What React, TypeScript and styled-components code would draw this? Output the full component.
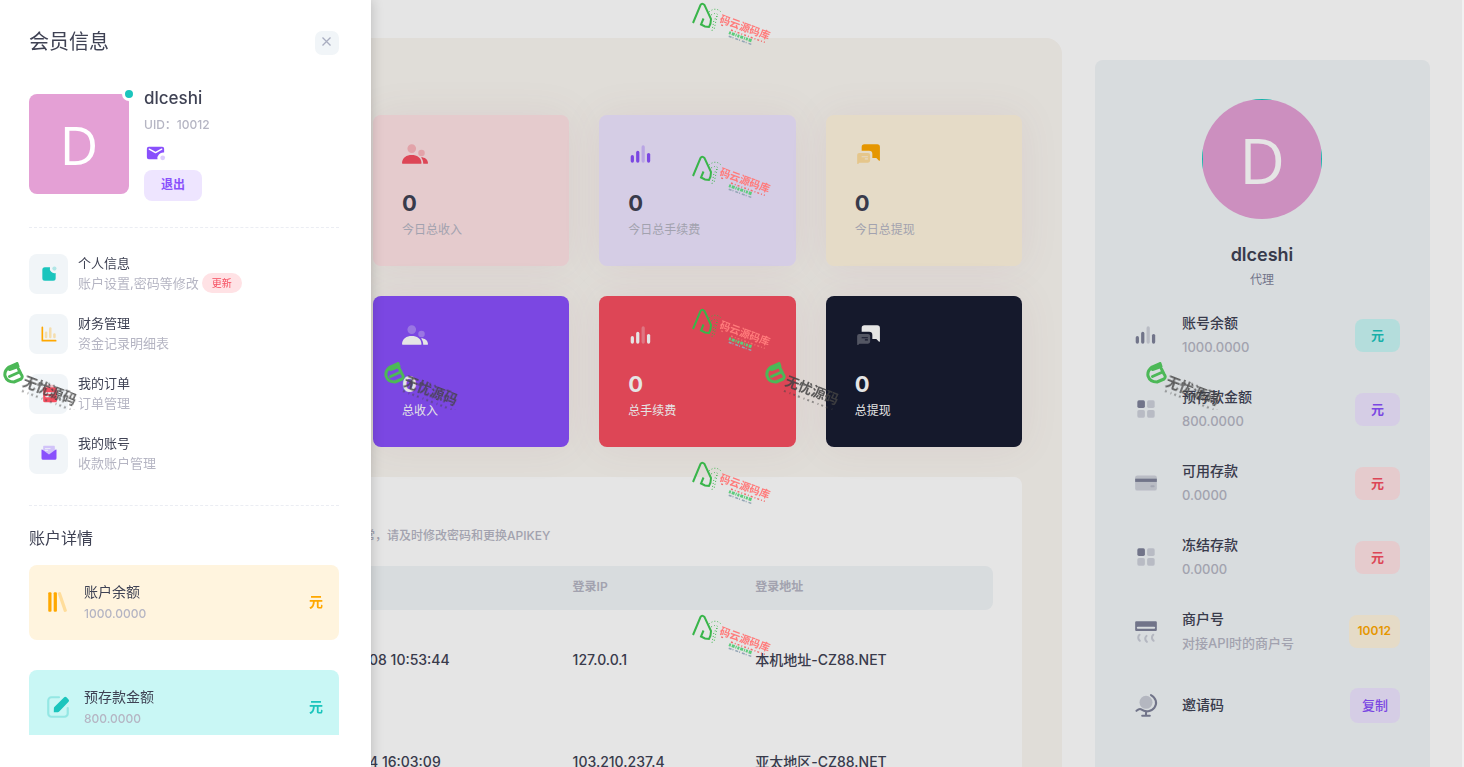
import React from "react";
import styled, { createGlobalStyle } from "styled-components";

const c = {
  text: "#3f4254",
  strong: "#3f4254",
  muted: "#b5b5c3",
  soft: "#f1f5f8",
  primary: "#8950fc",
  primaryLight: "#eee5ff",
  danger: "#f64e60",
  dangerLight: "#ffe2e5",
  warning: "#ffa800",
  warningLight: "#fff4de",
  success: "#1bc5bd",
  successLight: "#c9f7f5",
  dark: "#181c32",
  slate: "#7e8299",
};

const GlobalStyle = createGlobalStyle`
  *, *::before, *::after { box-sizing: border-box; }
  body {
    margin: 0;
    background: #fff;
    color: ${c.text};
    font-family: Inter, "Noto Sans CJK SC", sans-serif;
    font-size: 13px;
    line-height: 20px;
  }
  h1, h2, h3, p, ul { margin: 0; padding: 0; }
  ul { list-style: none; }
  a { color: inherit; text-decoration: none; }
  button { font: inherit; border: 0; cursor: pointer; }
`;

/* ---------- icons ---------- */

type IconName =
  | "group" | "equalizer" | "chat" | "mailDot" | "notify" | "chart" | "article"
  | "mailOpen" | "library" | "write" | "blocks" | "card" | "air" | "globe";

const glyphs: Record<IconName, React.ReactNode> = {
  group: (
    <>
      <path opacity=".3" d="M18 14a3 3 0 1 1 0-6 3 3 0 0 1 0 6ZM9 11a4 4 0 1 1 0-8 4 4 0 0 1 0 8Z" />
      <path d="M17.6 15c3.4.04 6.19 1.76 6.4 5.4.01.15 0 .6-.54.6H19.6c0-2.25-.74-4.33-2-6ZM0 20.2C.39 15.43 4.26 13 8.98 13c4.79 0 8.72 2.29 9.02 7.2.01.2 0 .8-.75.8H.73c-.25 0-.75-.54-.73-.8Z" />
    </>
  ),
  equalizer: (
    <>
      <rect opacity=".3" x="12.500" y="4" width="3" height="16" rx="1.5" />
      <rect x="7.500" y="9" width="3" height="11" rx="1.5" />
      <rect x="17.500" y="11" width="3" height="9" rx="1.5" />
      <rect x="2.500" y="13" width="3" height="7" rx="1.5" />
    </>
  ),
  chat: (
    <>
      <path d="M16 15.63V12a3 3 0 0 0-3-3H6.16V5.53A2.53 2.53 0 0 1 8.69 3h11.79A2.53 2.53 0 0 1 23 5.53v7.58l.02 4.68a.5.5 0 0 1-.85.35l-2.51-2.51H16Z" />
      <path opacity=".3" fillRule="evenodd" d="M1.99 18v-5a2 2 0 0 1 2-2h8a2 2 0 0 1 2 2v5a2 2 0 0 1-2 2H4.1l-1.24 1.19a.5.5 0 0 1-.85-.36v-2.5L1.99 18ZM6.5 14a.5.5 0 0 0 0 1h5a.5.5 0 0 0 0-1h-5Zm3 2a.5.5 0 0 0 0 1h2a.5.5 0 0 0 0-1h-2Z" />
    </>
  ),
  mailDot: (
    <>
      <path fillRule="evenodd" d="M21 12.08A6 6 0 0 0 14.08 19H5a2 2 0 0 1-2-2V8a2 2 0 0 1 2-2h14a2 2 0 0 1 2 2v4.08Zm-2.86-4.24L12 11.15 5.86 7.84a.75.75 0 0 0-.72 1.32l6.5 3.5c.23.12.49.12.72 0l6.5-3.5a.75.75 0 1 0-.72-1.32Z" />
      <circle opacity=".3" cx="19.5" cy="17.5" r="2.5" />
    </>
  ),
  notify: (
    <>
      <path d="M13.2 4A5.5 5.5 0 0 0 20 10.8V17a3 3 0 0 1-3 3H7a3 3 0 0 1-3-3V7a3 3 0 0 1 3-3h6.2Z" />
      <circle opacity=".3" cx="18.5" cy="5.5" r="2.5" />
    </>
  ),
  chart: (
    <>
      <rect opacity=".3" x="12" y="4" width="3" height="13" rx="1.5" />
      <rect opacity=".3" x="7" y="9" width="3" height="8" rx="1.5" />
      <rect opacity=".3" x="17" y="11" width="3" height="6" rx="1.5" />
      <path d="M5 19h15a1 1 0 0 1 0 2H4a1 1 0 0 1-1-1V4a1 1 0 1 1 2 0v15Z" />
    </>
  ),
  article: (
    <>
      <path fillRule="evenodd" d="M6 4h14a1.5 1.5 0 0 1 1.500 1.500V20a2 2 0 0 1-2 2H7a2 2 0 0 1-2-2V5a1 1 0 0 1 1-1Zm2.500 6a1 1 0 0 0 0 2h9a1 1 0 0 0 0-2h-9Zm0 4a1 1 0 0 0 0 2h5a1 1 0 0 0 0-2h-5Z" />
      <rect opacity=".3" x="8" y="1" width="10" height="3" rx="1" />
    </>
  ),
  mailOpen: (
    <>
      <path opacity=".3" fillRule="evenodd" d="M6 2h12a1 1 0 0 1 1 1v9a1 1 0 0 1-1 1H6a1 1 0 0 1-1-1V3a1 1 0 0 1 1-1Zm1.500 3a.5.5 0 0 0 0 1h6a.5.5 0 0 0 0-1h-6Zm0 2a.5.5 0 0 0 0 1h3a.5.5 0 0 0 0-1h-3Z" />
      <path d="M3.790 6.570 12 12.500l8.210-5.930a.5.5 0 0 1 .79.41V17a2 2 0 0 1-2 2H5a2 2 0 0 1-2-2V6.980a.5.5 0 0 1 .79-.41Z" />
    </>
  ),
  library: (
    <>
      <rect x="3" y="3" width="3" height="18" rx="1" />
      <rect x="8" y="3" width="3" height="18" rx="1" />
      <rect opacity=".3" x="14.500" y="2.500" width="3" height="19" rx="1" transform="rotate(-19 16 12)" />
    </>
  ),
  write: (
    <>
      <path transform="rotate(-135 14.700 10.700)" d="m12.270 18.230-.26-12.770c-.01-.4.140-.78.420-1.070L15 1.700l2.590 2.700c.27.280.42.650.420 1.040l-.04 12.770a1.500 1.500 0 0 1-1.500 1.490h-2.700a1.500 1.500 0 0 1-1.500-1.470Z" />
      <path opacity=".3" d="M12.900 2a1 1 0 0 1 0 2H6a2 2 0 0 0-2 2v12c0 1.100.9 2 2 2h12a2 2 0 0 0 2-2v-5a1 1 0 1 1 2 0v5a4 4 0 0 1-4 4H6a4 4 0 0 1-4-4V6a4 4 0 0 1 4-4h6.900Z" />
    </>
  ),
  blocks: (
    <>
      <rect x="4" y="4" width="7" height="7" rx="1.500" />
      <g opacity=".3">
        <rect x="13" y="4" width="7" height="7" rx="1.500" />
        <rect x="4" y="13" width="7" height="7" rx="1.500" />
        <rect x="13" y="13" width="7" height="7" rx="1.500" />
      </g>
    </>
  ),
  card: (
    <>
      <rect opacity=".3" x="2" y="5" width="20" height="14" rx="2" />
      <rect x="2" y="8" width="20" height="3" />
      <rect opacity=".3" x="16" y="14" width="4" height="2" rx="1" />
    </>
  ),
  air: (
    <>
      <path fillRule="evenodd" d="M3 3h18a1 1 0 0 1 1 1v7a1 1 0 0 1-1 1H3a1 1 0 0 1-1-1V4a1 1 0 0 1 1-1Zm1.500 5a.9.9 0 0 0 0 2h15a.9.9 0 0 0 0-2h-15Z" />
      <g opacity=".35" fill="none" stroke="currentColor" strokeWidth="1.900" strokeLinecap="round">
        <path d="M6 15.500C4.200 17.200 4.600 19.400 6.300 21M12.500 16.500c-1.800 1.700-1.500 3.900.3 5.500M18.700 15.500c-1.800 1.700-1.500 3.900.3 5.500" />
      </g>
    </>
  ),
  globe: (
    <>
      <circle opacity=".35" cx="12" cy="9.500" r="6" />
      <g fill="none" stroke="currentColor" strokeWidth="1.900" strokeLinecap="round" strokeLinejoin="round">
        <path d="M16.600 2.800c4.800 2.600 6 7.800 3.200 11.600-2.900 3.900-8.400 4.600-12.200 1.700-.9-.7-2.700-.2-4.400 1.300M12 18.500v3M8.500 21.900h7" />
      </g>
    </>
  ),
};

const IconSvg = styled.svg<{ $size: number }>`
  display: block;
  flex: none;
  width: ${(p) => p.$size}px;
  height: ${(p) => p.$size}px;
  fill: currentColor;
`;

const Icon = ({ name, size = 26 }: { name: IconName; size?: number }) => (
  <IconSvg viewBox="0 0 24 24" $size={size} aria-hidden="true">{glyphs[name]}</IconSvg>
);

/* ---------- page behind the drawer ---------- */

const Page = styled.div`
  position: relative;
  height: 100vh;
  overflow: hidden;
  border-right: 2px solid #f1f1f1;
`;

const Layout = styled.div`
  display: flex;
  align-items: stretch;
  gap: 33px;
  min-height: 100%;
  padding: 38px 32px 0 293px;
`;

const Panel = styled.main`
  flex: 1;
  min-width: 0;
  padding: 77px 40px 0;
  border-radius: 16px 16px 0 0;
  background: #faf6f1;
`;

const StatGrid = styled.div`
  display: grid;
  grid-template-columns: repeat(3, minmax(0, 1fr));
  gap: 30px;
  padding-left: 40px;
`;

const StatCard = styled.section<{ $bg: string; $label: string; $value: string; $icon: string }>`
  padding: 26px 29px;
  border-radius: 8px;
  background: ${(p) => p.$bg};
  color: ${(p) => p.$label};
  box-shadow: 0 0 40px rgba(140, 80, 90, 0.08);
  > svg { color: ${(p) => p.$icon}; }
  > strong { color: ${(p) => p.$value}; }
`;

const StatValue = styled.strong`
  display: block;
  margin-top: 19px;
  font-size: 22px;
  font-weight: 700;
  line-height: 34px;
`;

const StatLabel = styled.p`
  font-size: 12px;
  line-height: 20px;
`;

const LogCard = styled.section`
  margin-top: 30px;
  padding: 48px 29px 0 30px;
  border-radius: 0 8px 0 0;
  background: #fff;
`;

const LogNote = styled.p`
  margin-bottom: 19px;
  color: ${c.muted};
  font-size: 12px;
  font-weight: 500;
  line-height: 22px;
  white-space: nowrap;
`;

const LogTable = styled.table`
  width: 100%;
  table-layout: fixed;
  border-collapse: collapse;
  text-align: left;
  th {
    height: 44px;
    padding: 0 8px 3px;
    background: ${c.soft};
    color: ${c.muted};
    font-size: 12px;
    font-weight: 600;
  }
  th:nth-child(1) { width: 32%; }
  th:nth-child(2) { width: 29%; }
  th:last-child { border-radius: 0 8px 8px 0; }
  td {
    height: 102px;
    padding: 0 8px 2px;
    font-size: 14px;
    font-weight: 500;
    white-space: nowrap;
  }
  td:first-child { padding-left: 6px; }
`;

const Profile = styled.aside`
  flex: 0 0 335px;
  display: flex;
  flex-direction: column;
  align-items: center;
  margin-top: 22px;
  padding: 39px 30px 30px 29px;
  border-radius: 8px 8px 0 0;
  background: ${c.soft};
`;

const RoundAvatar = styled.div`
  width: 120px;
  height: 120px;
  border-radius: 50%;
  background: linear-gradient(${c.success} 0 1px, transparent 1px) center top / 20px 100% no-repeat,
    linear-gradient(90deg, ${c.success} 0 1px, #e4a0d5 1px 119px, ${c.success} 119px) center / 100% 20px no-repeat,
    #e4a0d5;
  overflow: hidden;
`;

const RoundAvatarFace = styled.div`
  display: flex;
  align-items: center;
  justify-content: center;
  height: 100%;
  padding-top: 2px;
  color: #fff;
  font-family: "Open Sans", sans-serif;
  font-size: 63px;
  line-height: 64px;
`;

const ProfileName = styled.h2`
  margin-top: 24px;
  font-size: 18px;
  font-weight: 600;
  line-height: 24px;
`;

const ProfileRole = styled.p`
  margin-top: 4px;
  color: ${c.slate};
  font-size: 12px;
  line-height: 18px;
`;

const AccountList = styled.ul`
  display: grid;
  gap: 26px;
  width: 100%;
  margin-top: 22px;
`;

const AccountRow = styled.li`
  display: flex;
  align-items: center;
  min-height: 48px;
`;

const AccountIcon = styled.span`
  display: flex;
  justify-content: center;
  width: 44px;
  margin-right: 14px;
  color: ${c.slate};
`;

const AccountText = styled.div`
  flex: 1;
  min-width: 0;
`;

const AccountTitle = styled.h3`
  font-size: 14px;
  font-weight: 500;
  line-height: 24px;
`;

const AccountValue = styled.p`
  color: ${c.muted};
  font-size: 13px;
  font-weight: 500;
  line-height: 24px;
`;

const Tag = styled.span<{ $bg: string; $fg: string; $narrow?: boolean }>`
  display: flex;
  align-items: center;
  justify-content: center;
  min-width: 45px;
  height: 33px;
  padding: 0 ${(p) => (p.$narrow ? 9 : 16)}px;
  border-radius: 8px;
  background: ${(p) => p.$bg};
  color: ${(p) => p.$fg};
  font-size: ${(p) => (p.$narrow ? 12 : 13)}px;
  font-weight: 600;
`;

const CopyButton = styled.button`
  height: 35px;
  padding: 0 12px;
  border-radius: 8px;
  background: ${c.primaryLight};
  color: ${c.primary};
  font-size: 13px;
  font-weight: 500;
`;

const Backdrop = styled.div`
  position: absolute;
  inset: 0;
  background: rgba(0, 0, 0, 0.1);
`;

/* ---------- drawer ---------- */

const Drawer = styled.aside`
  position: fixed;
  top: 0;
  bottom: 0;
  left: 0;
  display: flex;
  flex-direction: column;
  width: 371px;
  padding: 27px 32px 32px 29px;
  background: #fff;
  box-shadow: 0 0 12px rgba(0, 0, 0, 0.2);
`;

const DrawerHeader = styled.header`
  display: flex;
  align-items: center;
  justify-content: space-between;
`;

const DrawerTitle = styled.h1`
  font-size: 20px;
  font-weight: 400;
  line-height: 30px;
`;

const CloseButton = styled.button`
  display: flex;
  align-items: center;
  justify-content: center;
  width: 24px;
  height: 24px;
  margin-top: 1px;
  padding: 0 1px 2px 0;
  border-radius: 7px;
  background: ${c.soft};
  color: #a9adc0;
  svg { width: 9px; height: 9px; stroke: currentColor; stroke-width: 1.3; }
`;

const DrawerBody = styled.div`
  flex: 1;
  min-height: 0;
  margin-right: -10px;
  padding: 29px 10px 0 0;
  overflow: hidden;
`;

const UserBlock = styled.section`
  display: flex;
  align-items: center;
  gap: 15px;
  padding-bottom: 26px;
  border-bottom: 1px dashed #ebedf3;
`;

const SquareAvatar = styled.div`
  position: relative;
  display: flex;
  align-items: center;
  justify-content: center;
  flex: none;
  width: 100px;
  height: 100px;
  padding-top: 2px;
  border-radius: 8px;
  background: #e4a0d5;
  color: #fff;
  font-family: "Open Sans", sans-serif;
  font-size: 53px;
  font-weight: 500;
  line-height: 54px;
  &::after {
    content: "";
    position: absolute;
    top: -7px;
    right: -7px;
    width: 14px;
    height: 14px;
    border: 3px solid #fff;
    border-radius: 50%;
    background: ${c.success};
  }
`;

const UserInfo = styled.div`
  display: flex;
  flex-direction: column;
  align-items: flex-start;
  color: ${c.primary};
`;

const UserName = styled.a`
  color: ${c.text};
  font-size: 17px;
  font-weight: 500;
  line-height: 24px;
`;

const UserId = styled.p`
  margin: 5px 0 6px;
  color: ${c.muted};
  font-size: 12px;
  font-weight: 500;
  line-height: 20px;
`;

const LogoutButton = styled.button`
  height: 31px;
  margin-top: 6px;
  padding: 0 17px 2px;
  border-radius: 8px;
  background: ${c.primaryLight};
  color: ${c.primary};
  font-size: 12px;
  font-weight: 600;
`;

const Menu = styled.nav`
  display: grid;
  gap: 20px;
  padding: 26px 0 31px;
  border-bottom: 1px dashed #ebedf3;
`;

const MenuLink = styled.a`
  display: flex;
  align-items: center;
  gap: 10px;
  height: 40px;
`;

const MenuIcon = styled.span<{ $fg: string }>`
  display: flex;
  align-items: center;
  justify-content: center;
  width: 39px;
  height: 40px;
  border-radius: 8px;
  background: ${c.soft};
  color: ${(p) => p.$fg};
`;

const MenuText = styled.span`
  padding-bottom: 3px;
`;

const MenuTitle = styled.span`
  display: block;
`;

const MenuHint = styled.span`
  display: flex;
  align-items: center;
  gap: 3px;
  height: 20px;
  color: ${c.muted};
`;

const NewBadge = styled.span`
  padding: 0 10px;
  border-radius: 10px;
  background: ${c.dangerLight};
  color: ${c.danger};
  font-size: 10px;
`;

const DetailTitle = styled.h2`
  margin: 20px 0 15px;
  font-size: 16px;
  font-weight: 400;
  line-height: 24px;
`;

const DetailCard = styled.section<{ $bg: string; $fg: string }>`
  display: flex;
  align-items: center;
  height: 75px;
  margin-bottom: 30px;
  padding: 0 16px 2px;
  border-radius: 8px;
  background: ${(p) => p.$bg};
  color: ${(p) => p.$fg};
`;

const DetailText = styled.div`
  flex: 1;
  margin-left: 13px;
`;

const DetailName = styled.h3`
  color: ${c.text};
  font-size: 14px;
  font-weight: 400;
  line-height: 24px;
`;

const DetailValue = styled.p`
  color: ${c.muted};
  font-size: 12px;
  font-weight: 500;
  line-height: 20px;
`;

const Unit = styled.strong`
  font-size: 14px;
  font-weight: 600;
`;

/* ---------- watermarks ---------- */

const MarkLayer = styled.div`
  position: fixed;
  inset: 0;
  overflow: hidden;
  pointer-events: none;
`;

const Mark = styled.svg<{ $x: number; $y: number }>`
  position: absolute;
  left: ${(p) => p.$x}px;
  top: ${(p) => p.$y}px;
  width: 82px;
  height: 48px;
  font-family: "Noto Sans CJK SC", sans-serif;
  font-weight: 700;
`;

const CloudMark = ({ y }: { y: number }) => (
  <Mark viewBox="0 0 82 48" $x={692} $y={y} aria-hidden="true">
    <path d="M1 21 8.500 3Q10 .5 12.500 3L19 17Q19 22 17 25l-4-.5-4-2 2.500-6" fill="none" stroke="#39b54a" strokeWidth="2" />
    <path d="M17 10q7-6 13 1M19 13q5-3 7 0l-4 5-2 11M25 14l-3 14" fill="none" stroke="#39b54a" strokeWidth="1" strokeDasharray="1 2" />
    <g transform="translate(27 20) rotate(20)">
      <text fontSize="10.500" fill="#ff7b7b">码云源码库</text>
      <path d="M3 2h4M14 3.500h36" stroke="#f26d6d" strokeWidth="1.500" strokeDasharray="2 2 1 2" />
      <path d="M13 6.500h24" stroke="#5ccc7c" strokeWidth="3" strokeDasharray="2 1 3 1 1 1" />
      <path d="M14 10h24" stroke="#93a5b5" strokeWidth="1.500" strokeDasharray="3 1 1 2" />
    </g>
  </Mark>
);

const SourceMark = ({ x }: { x: number }) => (
  <Mark viewBox="0 0 82 48" $x={x} $y={362} aria-hidden="true">
    <path d="m6.500 7.500 8.500-3-1-3-8 3.500Q1 9 2 14q2 6 9 6l7-3q2.500-2 0-5l-2.500-5M6.500 14.500l9-4" fill="none" stroke="#4cb857" strokeWidth="3" strokeLinejoin="round" strokeLinecap="round" />
    <g transform="translate(19 23) rotate(21)" fill="#444" opacity=".85">
      <text fontSize="14">无忧源码</text>
      <path d="M2 5.500h56" stroke="#444" strokeWidth="2" strokeDasharray="2 4 1 3 2 3" opacity=".6" />
    </g>
  </Mark>
);

/* ---------- data ---------- */

const stats: { icon: IconName; label: string; bg: string; fg: string; filled?: boolean }[] = [
  { icon: "group", label: "今日总收入", bg: c.dangerLight, fg: c.danger },
  { icon: "equalizer", label: "今日总手续费", bg: c.primaryLight, fg: c.primary },
  { icon: "chat", label: "今日总提现", bg: c.warningLight, fg: c.warning },
  { icon: "group", label: "总收入", bg: c.primary, fg: "#fff", filled: true },
  { icon: "equalizer", label: "总手续费", bg: c.danger, fg: "#fff", filled: true },
  { icon: "chat", label: "总提现", bg: c.dark, fg: "#fff", filled: true },
];

const logs = [
  ["08 10:53:44", "127.0.0.1", "本机地址-CZ88.NET"],
  ["4 16:03:09", "103.210.237.4", "亚太地区-CZ88.NET"],
];

const accounts: { icon: IconName; title: string; value: string; tag: string; bg: string; fg: string; narrow?: boolean }[] = [
  { icon: "equalizer", title: "账号余额", value: "1000.0000", tag: "元", bg: c.successLight, fg: c.success },
  { icon: "blocks", title: "预存款金额", value: "800.0000", tag: "元", bg: c.primaryLight, fg: c.primary },
  { icon: "card", title: "可用存款", value: "0.0000", tag: "元", bg: c.dangerLight, fg: c.danger },
  { icon: "blocks", title: "冻结存款", value: "0.0000", tag: "元", bg: c.dangerLight, fg: c.danger },
  { icon: "air", title: "商户号", value: "对接API时的商户号", tag: "10012", bg: c.warningLight, fg: c.warning, narrow: true },
];

const menu: { icon: IconName; title: string; hint: string; fg: string; badge?: string }[] = [
  { icon: "notify", title: "个人信息", hint: "账户设置,密码等修改", fg: c.success, badge: "更新" },
  { icon: "chart", title: "财务管理", hint: "资金记录明细表", fg: c.warning },
  { icon: "article", title: "我的订单", hint: "订单管理", fg: c.danger },
  { icon: "mailOpen", title: "我的账号", hint: "收款账户管理", fg: c.primary },
];

export default function App() {
  return (
    <>
      <GlobalStyle />
      <Page>
        <Layout>
          <Panel>
            <StatGrid>
              {stats.map((s) => (
                <StatCard
                  key={s.label}
                  $bg={s.bg}
                  $icon={s.fg}
                  $value={s.filled ? "#fff" : c.strong}
                  $label={s.filled ? "#fff" : c.muted}
                >
                  <Icon name={s.icon} />
                  <StatValue>0</StatValue>
                  <StatLabel>{s.label}</StatLabel>
                </StatCard>
              ))}
            </StatGrid>
            <LogCard>
              <LogNote>常，请及时修改密码和更换APIKEY</LogNote>
              <LogTable>
                <thead>
                  <tr>
                    <th aria-label="时间" />
                    <th>登录IP</th>
                    <th>登录地址</th>
                  </tr>
                </thead>
                <tbody>
                  {logs.map((row) => (
                    <tr key={row[1]}>
                      {row.map((cell) => <td key={cell}>{cell}</td>)}
                    </tr>
                  ))}
                </tbody>
              </LogTable>
            </LogCard>
          </Panel>
          <Profile>
            <RoundAvatar><RoundAvatarFace>D</RoundAvatarFace></RoundAvatar>
            <ProfileName>dlceshi</ProfileName>
            <ProfileRole>代理</ProfileRole>
            <AccountList>
              {accounts.map((a) => (
                <AccountRow key={a.title}>
                  <AccountIcon><Icon name={a.icon} /></AccountIcon>
                  <AccountText>
                    <AccountTitle>{a.title}</AccountTitle>
                    <AccountValue>{a.value}</AccountValue>
                  </AccountText>
                  <Tag $bg={a.bg} $fg={a.fg} $narrow={a.narrow}>{a.tag}</Tag>
                </AccountRow>
              ))}
              <AccountRow>
                <AccountIcon><Icon name="globe" /></AccountIcon>
                <AccountText><AccountTitle>邀请码</AccountTitle></AccountText>
                <CopyButton type="button">复制</CopyButton>
              </AccountRow>
            </AccountList>
          </Profile>
        </Layout>
        <Backdrop />
      </Page>

      <Drawer>
        <DrawerHeader>
          <DrawerTitle>会员信息</DrawerTitle>
          <CloseButton type="button" aria-label="关闭">
            <svg viewBox="0 0 9 9" aria-hidden="true"><path d="m.5.5 8 8m0-8-8 8" /></svg>
          </CloseButton>
        </DrawerHeader>
        <DrawerBody>
          <UserBlock>
            <SquareAvatar>D</SquareAvatar>
            <UserInfo>
              <UserName href="#">dlceshi</UserName>
              <UserId>UID：10012</UserId>
              <Icon name="mailDot" size={23} />
              <LogoutButton type="button">退出</LogoutButton>
            </UserInfo>
          </UserBlock>
          <Menu>
            {menu.map((m) => (
              <MenuLink key={m.title} href="#">
                <MenuIcon $fg={m.fg}><Icon name={m.icon} size={20} /></MenuIcon>
                <MenuText>
                  <MenuTitle>{m.title}</MenuTitle>
                  <MenuHint>
                    {m.hint}
                    {m.badge && <NewBadge>{m.badge}</NewBadge>}
                  </MenuHint>
                </MenuText>
              </MenuLink>
            ))}
          </Menu>
          <DetailTitle>账户详情</DetailTitle>
          <DetailCard $bg={c.warningLight} $fg={c.warning}>
            <Icon name="library" />
            <DetailText>
              <DetailName>账户余额</DetailName>
              <DetailValue>1000.0000</DetailValue>
            </DetailText>
            <Unit>元</Unit>
          </DetailCard>
          <DetailCard $bg={c.successLight} $fg={c.success}>
            <Icon name="write" />
            <DetailText>
              <DetailName>预存款金额</DetailName>
              <DetailValue>800.0000</DetailValue>
            </DetailText>
            <Unit>元</Unit>
          </DetailCard>
        </DrawerBody>
      </Drawer>

      <MarkLayer aria-hidden="true">
        {[2, 155, 308, 461, 614].map((y) => <CloudMark key={y} y={y} />)}
        {[3, 384, 765, 1146].map((x) => <SourceMark key={x} x={x} />)}
      </MarkLayer>
    </>
  );
}
